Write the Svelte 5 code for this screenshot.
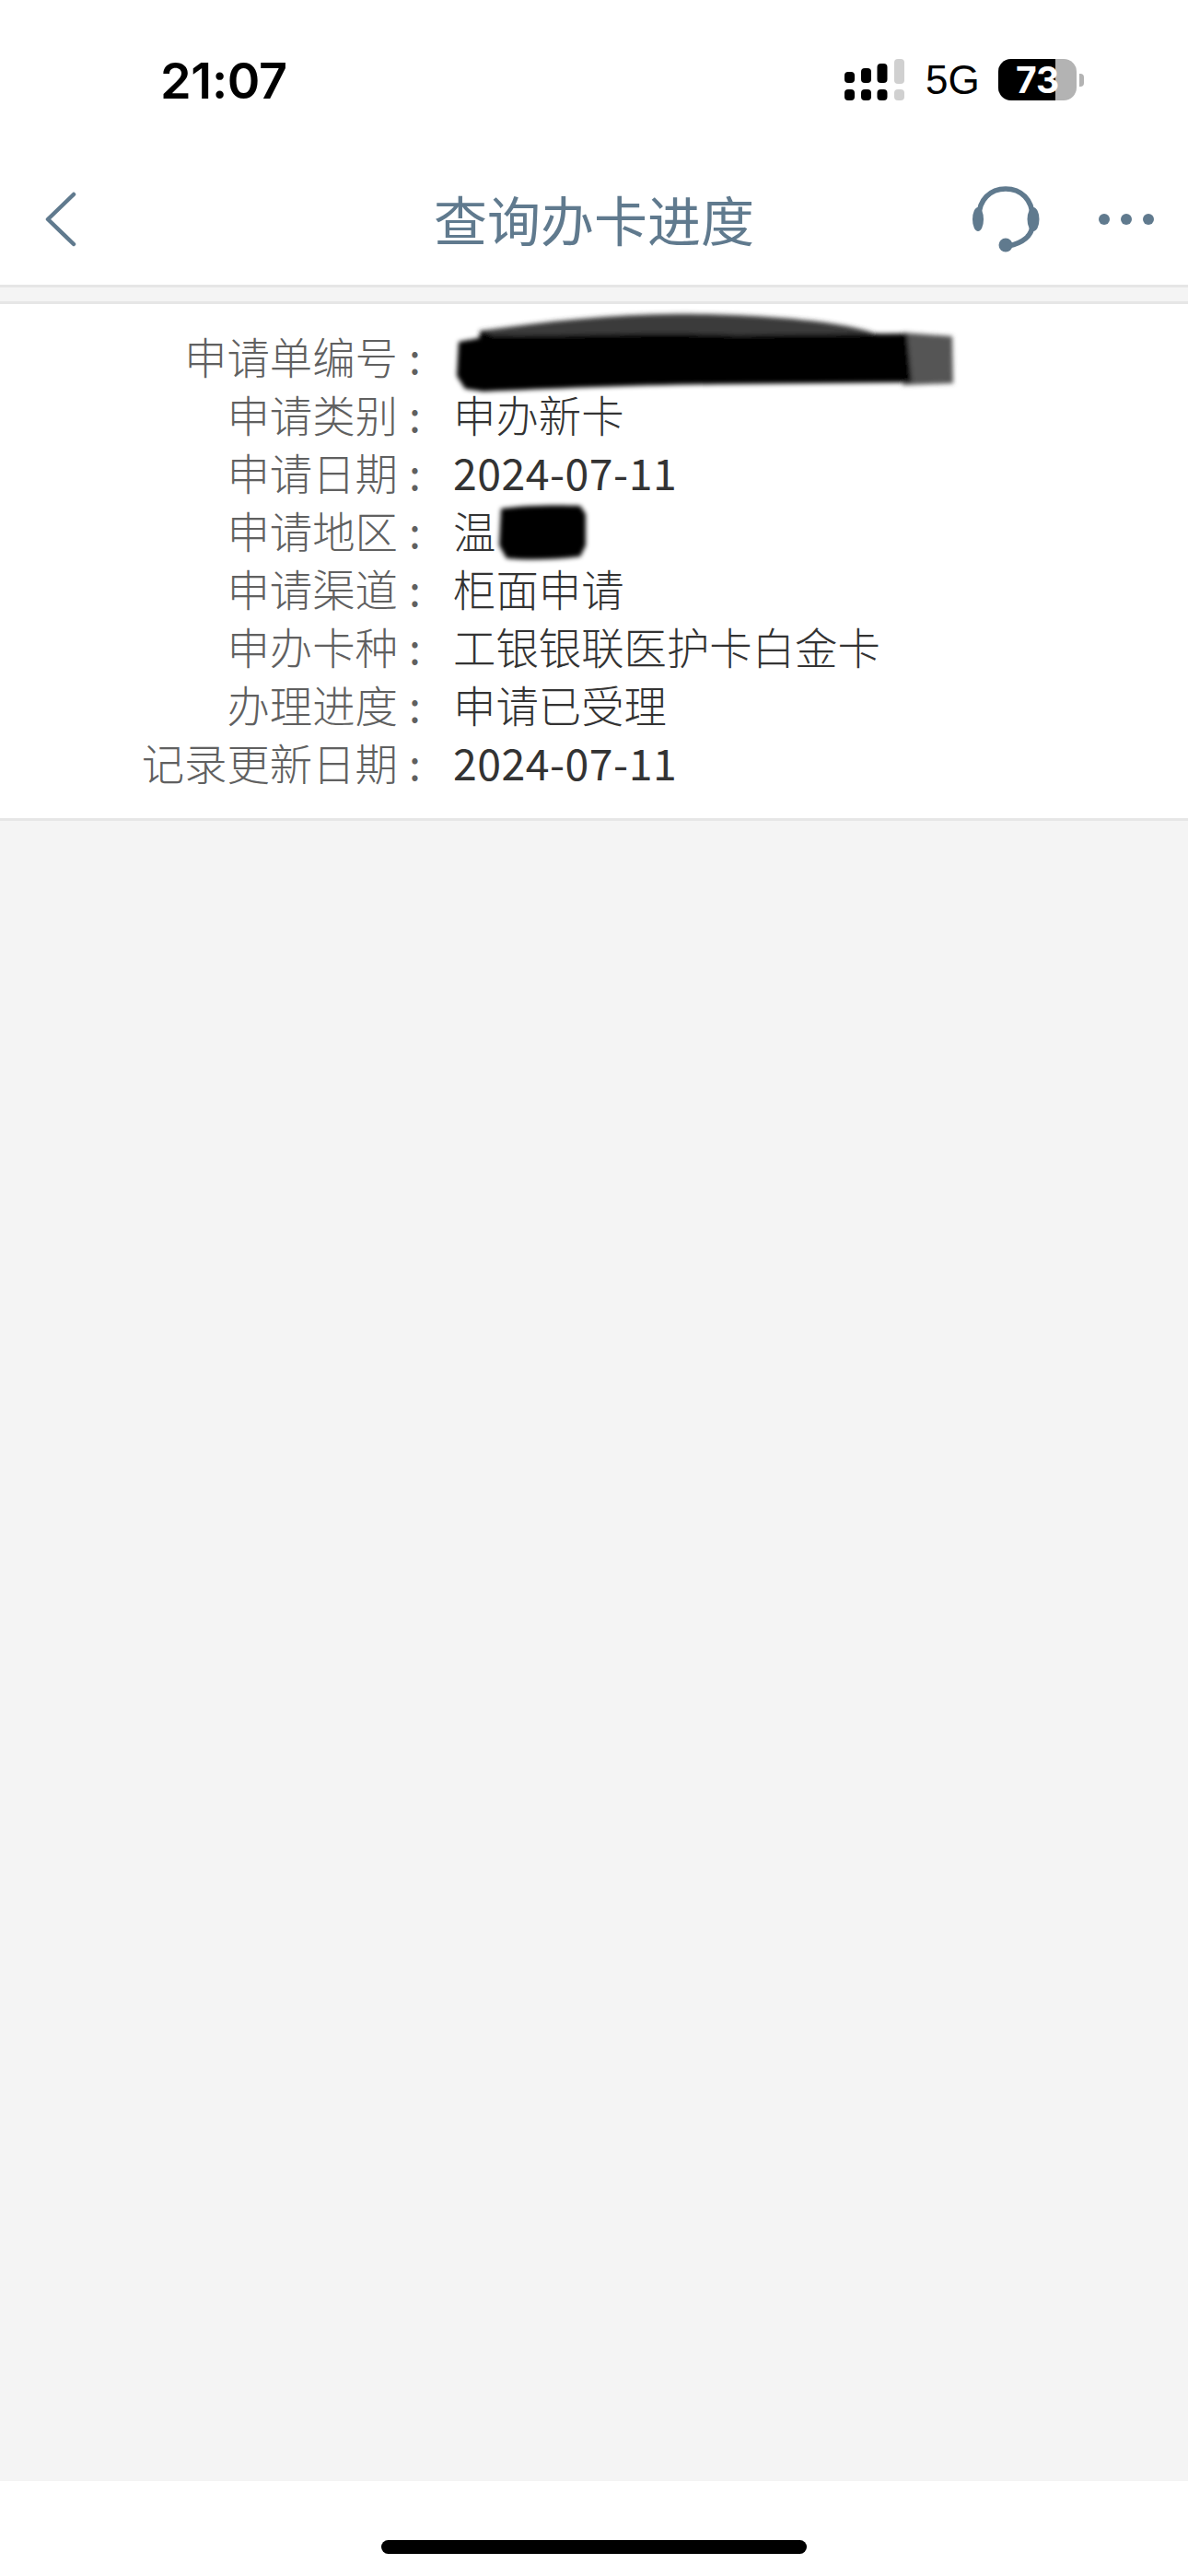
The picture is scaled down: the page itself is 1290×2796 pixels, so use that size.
<script>
  const rows = [
    { label: '申请单编号', value: '' },
    { label: '申请类别', value: '申办新卡' },
    { label: '申请日期', value: '2024-07-11', num: true },
    { label: '申请地区', value: '温' },
    { label: '申请渠道', value: '柜面申请' },
    { label: '申办卡种', value: '工银银联医护卡白金卡' },
    { label: '办理进度', value: '申请已受理' },
    { label: '记录更新日期', value: '2024-07-11', num: true }
  ];
</script>

<div class="page">
  <header class="top">
    <div class="status">
      <span class="time">21:07</span>
      <div class="indicators">
        <svg class="signal" width="65" height="45" viewBox="0 0 65 45" aria-hidden="true">
          <g fill="#000">
            <rect x="0" y="14" width="11" height="12" rx="4" />
            <rect x="18" y="10" width="11" height="16" rx="4" />
            <rect x="35.500" y="5" width="11" height="21" rx="4" />
            <rect x="0" y="33" width="11" height="12" rx="4" />
            <rect x="18" y="33" width="11" height="12" rx="4" />
            <rect x="35.500" y="33" width="11" height="12" rx="4" />
          </g>
          <g fill="#d0d0d0">
            <rect x="54" y="0" width="11" height="27" rx="4" />
            <rect x="54" y="33" width="11" height="12" rx="4" />
          </g>
        </svg>
        <span class="net">5G</span>
        <div class="battery">
          <div class="cell">
            <div class="charge"></div>
            <span class="level">73</span>
          </div>
          <div class="nub"></div>
        </div>
      </div>
    </div>
    <nav class="bar">
      <button class="back" aria-label="返回">
        <svg width="40" height="60" viewBox="0 0 40 60" aria-hidden="true">
          <path d="M33 3 L5 30 L33 57" fill="none" stroke="#607a8e" stroke-width="4.500" stroke-linecap="round" stroke-linejoin="round" />
        </svg>
      </button>
      <h1 class="title">查询办卡进度</h1>
      <div class="actions">
        <svg class="headset" width="74" height="72" viewBox="0 0 74 72" aria-hidden="true">
          <path d="M8 36 V33 C8 15 20 3 37 3 C54 3 66 15 66 33 V42 C66 54 55 62 40 65" fill="none" stroke="#607a8e" stroke-width="5.500" stroke-linecap="round" />
          <ellipse cx="7" cy="36" rx="6" ry="13" fill="#607a8e" />
          <ellipse cx="67" cy="36" rx="6.500" ry="13" fill="#607a8e" />
          <circle cx="37" cy="64" r="7.500" fill="#607a8e" />
        </svg>
        <svg class="more" width="60" height="12" viewBox="0 0 60 12" aria-hidden="true">
          <circle cx="6" cy="6" r="6" fill="#607a8e" />
          <circle cx="30" cy="6" r="6" fill="#607a8e" />
          <circle cx="54" cy="6" r="6" fill="#607a8e" />
        </svg>
      </div>
    </nav>
  </header>

  <div class="spacer"></div>

  <section class="card">
    {#each rows as row}
      <div class="row">
        <span class="label">{row.label}</span>
        <span class="colon">:</span>
        <span class="value" class:num={row.num}>{row.value}</span>
      </div>
    {/each}

    <svg class="redact" width="1290" height="290" viewBox="0 0 1290 290" aria-hidden="true">
      <defs>
        <filter id="soft" x="-5%" y="-20%" width="110%" height="140%">
          <feGaussianBlur stdDeviation="2.500" />
        </filter>
      </defs>
      <g filter="url(#soft)">
        <path d="M980 31 L1034 35 L1035 86 L980 88 Z" fill="#555" />
        <path d="M521 29 C600 18 680 9 760 11 C840 12 920 20 950 32 L985 36 L980 60 L520 60 Z" fill="#3a3a3a" />
        <path d="M498 41 L520 37 L523 29 L535 34 C600 36 700 30 800 34 L985 32 L990 85 L780 87 C680 88 600 92 525 95 L505 92 L496 78 Z" fill="#000" />
        <path d="M544 222 C570 218 610 218 630 219 L636 228 L636 262 L630 274 C600 278 570 278 550 276 L542 262 Z" fill="#000" />
      </g>
    </svg>
  </section>

  <main class="fill"></main>

  <footer class="foot">
    <div class="home"></div>
  </footer>
</div>

<style>
  :global(body) {
    margin: 0;
    background: #fff;
  }

  .page {
    width: 1290px;
    height: 2796px;
    display: flex;
    flex-direction: column;
    background: #f4f4f4;
    font-family: "Noto Sans CJK SC", "Noto Sans", sans-serif;
  }

  .top {
    height: 309px;
    box-sizing: border-box;
    background: #fff;
    display: flex;
    flex-direction: column;
    flex: none;
  }

  .status {
    height: 176px;
    display: flex;
    align-items: flex-start;
    justify-content: space-between;
    padding: 65px 113px 0 174px;
    box-sizing: border-box;
  }

  .time {
    font-family: Inter, "Liberation Sans", sans-serif;
    font-size: 54px;
    font-weight: 600;
    line-height: 46px;
    color: #000;
    letter-spacing: -0.3px;
  }

  .indicators {
    display: flex;
    align-items: flex-start;
    gap: 23px;
    margin-top: -1px;
  }

  .net {
    font-family: "Liberation Sans", Arial, sans-serif;
    font-size: 44px;
    line-height: 45px;
    color: #000;
    width: 56px;
  }

  .battery {
    display: flex;
    align-items: center;
    gap: 3px;
  }

  .cell {
    position: relative;
    width: 85px;
    height: 45px;
    border-radius: 14px;
    overflow: hidden;
    background: #b3b3b3;
    display: flex;
    align-items: center;
    justify-content: center;
  }

  .charge {
    position: absolute;
    left: 0;
    top: 0;
    bottom: 0;
    width: 62px;
    background: #000;
  }

  .level {
    position: relative;
    font-family: Inter, "Liberation Sans", sans-serif;
    font-size: 39px;
    font-weight: 700;
    color: #fff;
    line-height: 45px;
  }

  .nub {
    width: 5px;
    height: 14px;
    border-radius: 0 4px 4px 0;
    background: #b3b3b3;
  }

  .bar {
    flex: 1;
    display: flex;
    align-items: flex-start;
    position: relative;
    padding: 26px 37px 0 47px;
  }

  .back {
    border: 0;
    background: none;
    padding: 6px 0 0;
    width: 40px;
    height: 66px;
    display: block;
  }

  .back svg {
    display: block;
  }

  .title {
    position: absolute;
    left: 0;
    right: 0;
    top: 28px;
    margin: 0;
    text-align: center;
    font-size: 58px;
    font-weight: 400;
    line-height: 66px;
    color: #607a8e;
  }

  .actions {
    margin-left: auto;
    display: flex;
    align-items: center;
    gap: 64px;
    height: 72px;
  }

  .headset,
  .more {
    display: block;
  }

  .spacer {
    height: 15px;
    flex: none;
    border-top: 3px solid #e6e6e6;
    border-bottom: 3px solid #e6e6e6;
  }

  .card {
    position: relative;
    flex: none;
    height: 558px;
    box-sizing: border-box;
    padding-top: 24px;
    background: #fff;
    display: flex;
    flex-direction: column;
  }

  .row {
    height: 63px;
    flex: none;
    display: grid;
    grid-template-columns: 432px 60px 1fr;
    align-items: center;
    font-size: 46.400px;
    font-weight: 300;
    line-height: 63px;
    white-space: nowrap;
  }

  .label {
    text-align: right;
    color: #606060;
  }

  .colon {
    color: #606060;
    padding-left: 12px;
    font-weight: 400;
  }

  .value {
    color: #333;
  }

  .num {
    font-weight: 400;
    letter-spacing: 0.5px;
  }

  .redact {
    position: absolute;
    left: 0;
    top: 0;
    pointer-events: none;
  }

  .fill {
    flex: 1;
    border-top: 3px solid #e6e6e6;
  }

  .foot {
    height: 103px;
    flex: none;
    box-sizing: border-box;
    background: #fff;
    padding-top: 64px;
    display: flex;
    justify-content: center;
  }

  .home {
    width: 462px;
    height: 15px;
    border-radius: 8px;
    background: #000;
  }
</style>
